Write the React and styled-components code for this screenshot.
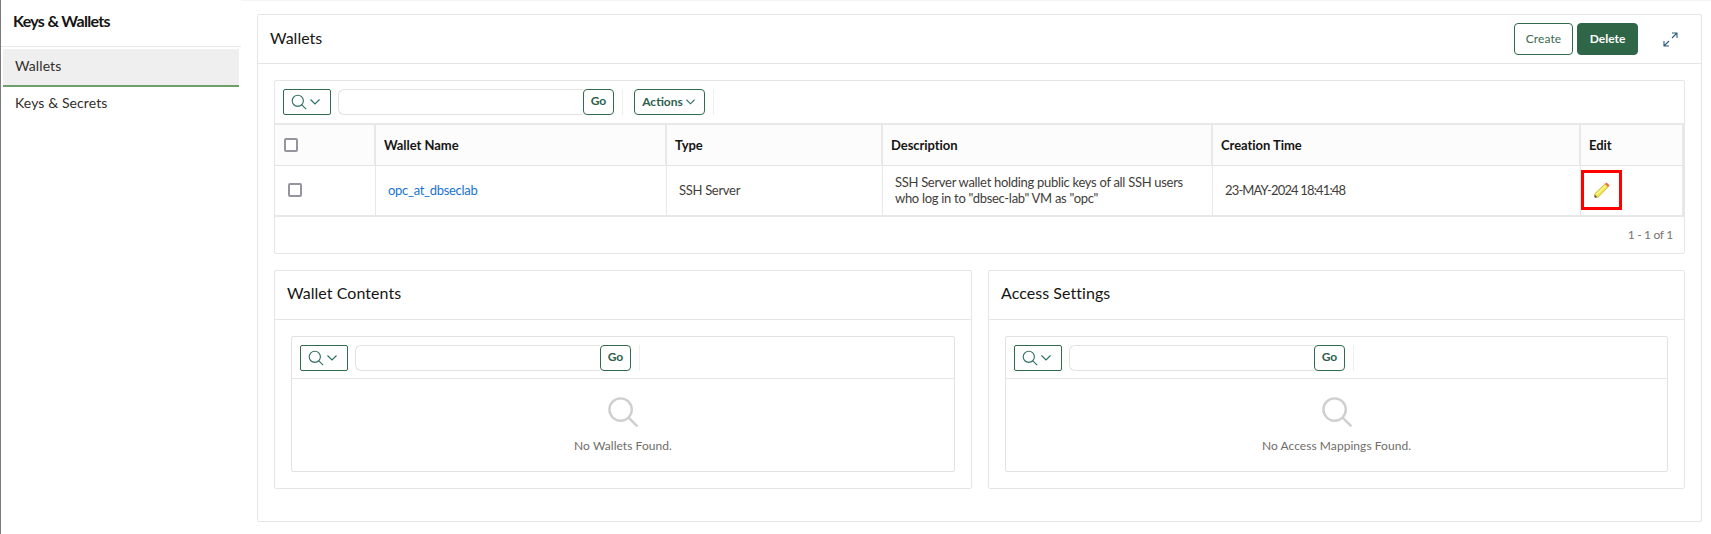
import React from 'react'
import styled, { createGlobalStyle } from 'styled-components'

const GlobalStyle = createGlobalStyle`
  html, body { margin: 0; padding: 0; background: #fff; }
  body { font-family: "Lato", "Noto Sans", sans-serif; color: #161513; }
`

const columns = '101px 291px 216px 330px 368px 1fr'

function SearchIcon({ size = 16, color = '#2f6f63', stroke = 1.4 }) {
  return (
    <svg width={size} height={size} viewBox="0 0 20 20" fill="none" stroke={color} strokeWidth={stroke}>
      <circle cx="8.5" cy="8.5" r="7" />
      <path d="M13.5 13.5 L19 19" />
    </svg>
  )
}

function Chevron({ color = '#2f6f63', width = 10 }) {
  return (
    <svg width={width} height="6" viewBox="0 0 10 6" fill="none" stroke={color} strokeWidth="1.2">
      <path d="M0.5 0.5 L5 5 L9.5 0.5" />
    </svg>
  )
}

function ExpandIcon() {
  return (
    <svg width="15" height="15" viewBox="0 0 15 15" fill="none" stroke="#2b5c7d" strokeWidth="1.1">
      <path d="M9 1 H14 V6 M14 1 L9 6" />
      <path d="M1 9 V14 H6 M1 14 L6 9" />
    </svg>
  )
}

function PencilIcon() {
  return (
    <svg width="16" height="16" viewBox="0 0 16 16">
      <path d="M0.8 11.8 L11 1.8 L14.2 5 L4 15.2 L0.8 15.2 Z" fill="#f4e64e" stroke="#b9a62a" strokeWidth="0.7" />
      <path d="M2.6 12.4 L12 3.4" stroke="#fff8a8" strokeWidth="1.1" />
      <path d="M11 1.8 L12.6 0.4 L15.6 3.4 L14.2 5 Z" fill="#ef6a45" />
      <path d="M0.8 12.8 L3.2 15.2 L0.6 15.6 Z" fill="#4a4a42" />
    </svg>
  )
}

function Toolbar({ actions, height = 42 }) {
  return (
    <ToolbarRow $height={height}>
      <SearchButton>
        <SearchIcon />
        <Chevron />
      </SearchButton>
      <SearchField>
        <SearchInput />
        <GoButton>Go</GoButton>
      </SearchField>
      <ToolDivider />
      {actions && (
        <>
          <ActionsButton>
            Actions <Chevron width={9} />
          </ActionsButton>
          <ToolDivider />
        </>
      )}
    </ToolbarRow>
  )
}

function SubPanel({ title, message }) {
  return (
    <Panel>
      <SubHeader>{title}</SubHeader>
      <SubBody>
        <EmptyCard>
          <Toolbar height={41} />
          <EmptyState>
            <SearchIcon size={32} color="#d0cfce" stroke={1.5} />
            <EmptyText>{message}</EmptyText>
          </EmptyState>
        </EmptyCard>
      </SubBody>
    </Panel>
  )
}

export default function App() {
  return (
    <Page>
      <GlobalStyle />
      <Sidebar>
        <SideTitle>Keys &amp; Wallets</SideTitle>
        <SideNav>
          <SideItem $active>Wallets</SideItem>
          <SideItem>Keys &amp; Secrets</SideItem>
        </SideNav>
      </Sidebar>
      <Main>
        <MainPanel>
          <MainHeader>
            <MainTitle>Wallets</MainTitle>
            <HeaderActions>
              <CreateButton>Create</CreateButton>
              <DeleteButton>Delete</DeleteButton>
              <ExpandSlot><ExpandIcon /></ExpandSlot>
            </HeaderActions>
          </MainHeader>
          <MainBody>
            <ReportCard>
              <Toolbar actions />
              <HeadRow>
                <HeadCheckCell><Checkbox /></HeadCheckCell>
                <HeadCell>Wallet Name</HeadCell>
                <HeadCell>Type</HeadCell>
                <HeadCell>Description</HeadCell>
                <HeadCell>Creation Time</HeadCell>
                <HeadCell>Edit</HeadCell>
              </HeadRow>
              <DataRow>
                <CheckCell><Checkbox /></CheckCell>
                <DataCell><WalletLink>opc_at_dbseclab</WalletLink></DataCell>
                <DataCell>SSH Server</DataCell>
                <DataCell>SSH Server wallet holding public keys of all SSH users<br />who log in to "dbsec-lab" VM as "opc"</DataCell>
                <TimeCell>23-MAY-2024 18:41:48</TimeCell>
                <EditCell><Highlight><PencilIcon /></Highlight></EditCell>
              </DataRow>
              <Pagination>1 - 1 of 1</Pagination>
            </ReportCard>
            <SubGrid>
              <SubPanel title="Wallet Contents" message="No Wallets Found." />
              <SubPanel title="Access Settings" message="No Access Mappings Found." />
            </SubGrid>
          </MainBody>
        </MainPanel>
      </Main>
    </Page>
  )
}

const Page = styled.div`
  display: flex;
  width: 1711px;
  height: 534px;
  overflow: hidden;
  border-left: 1px solid #7a7a7a;
  box-sizing: border-box;
`

const Sidebar = styled.aside`
  width: 240px;
  flex: none;
`

const SideTitle = styled.div`
  height: 46px;
  padding-left: 12px;
  font-size: 16px;
  font-weight: 700;
  line-height: 41px;
  letter-spacing: -0.7px;
  border-bottom: 1px solid #e9e9e9;
`

const SideNav = styled.nav`
  display: flex;
  flex-direction: column;
  padding: 2px 2px 0;
`

const SideItem = styled.div`
  height: 36px;
  padding-left: 12px;
  font-size: 14px;
  line-height: ${props => (props.$active ? '33px' : '31px')};
  letter-spacing: 0.1px;
  color: #312d2a;
  background: ${props => (props.$active ? '#efefef' : 'transparent')};
  border-bottom: 2px solid ${props => (props.$active ? '#6f9f6b' : 'transparent')};
`

const Main = styled.main`
  flex: 1;
  padding: 14px 9px 0 16px;
  border-top: 1px solid #f4f4f4;
`

const MainPanel = styled.section`
  height: 508px;
  box-sizing: border-box;
  margin-top: -1px;
  border: 1px solid #e6e6e6;
  border-radius: 2px;
`

const MainHeader = styled.header`
  display: flex;
  align-items: center;
  justify-content: space-between;
  height: 48px;
  padding: 0 23px 0 12px;
  border-bottom: 1px solid #e6e6e6;
`

const MainTitle = styled.h2`
  margin: 0 0 4px;
  font-size: 16px;
  font-weight: 400;
`

const HeaderActions = styled.div`
  display: flex;
  align-items: center;
  gap: 4px;
`

const BaseButton = styled.button`
  height: 32px;
  box-sizing: border-box;
  border-radius: 4px;
  font-family: inherit;
  font-size: 12px;
  padding: 0 0 2px;
`

const CreateButton = styled(BaseButton)`
  width: 59px;
  background: #fff;
  color: #3a6b50;
  border: 1px solid #316a4c;
  letter-spacing: 0.1px;
`

const DeleteButton = styled(BaseButton)`
  width: 61px;
  background: #2f6647;
  color: #fff;
  font-weight: 700;
  border: 1px solid #2f6647;
`

const ExpandSlot = styled.div`
  display: flex;
  margin-left: 21px;
`

const MainBody = styled.div`
  padding: 16px 16px 0;
`

const ReportCard = styled.div`
  border: 1px solid #e6e6e6;
  border-radius: 2px;
`

const ToolbarRow = styled.div`
  display: flex;
  align-items: center;
  height: ${props => props.$height}px;
  box-sizing: border-box;
  padding-left: 8px;
`

const SearchButton = styled.div`
  display: flex;
  align-items: center;
  gap: 3px;
  width: 48px;
  height: 26px;
  box-sizing: border-box;
  padding-left: 7px;
  border: 1px solid #316a4c;
  border-radius: 2px;
`

const SearchField = styled.div`
  display: flex;
  margin-left: 7px;
  height: 26px;
`

const SearchInput = styled.div`
  width: 245px;
  box-sizing: border-box;
  border: 1px solid #e2e2e2;
  border-right: none;
  border-radius: 6px 0 0 6px;
`

const GoButton = styled.div`
  width: 31px;
  box-sizing: border-box;
  border: 1px solid #316a4c;
  border-radius: 4px;
  text-align: center;
  font-size: 12px;
  font-weight: 700;
  line-height: 21px;
  color: #2c5f4e;
`

const ToolDivider = styled.div`
  width: 1px;
  height: 26px;
  margin-left: 8px;
  background: #efefef;
`

const ActionsButton = styled.div`
  display: flex;
  align-items: center;
  gap: 3px;
  justify-content: center;
  width: 71px;
  height: 26px;
  box-sizing: border-box;
  margin-left: 11px;
  padding: 0 2px 2px 0;
  border: 1px solid #316a4c;
  border-radius: 4px;
  font-size: 12px;
  font-weight: 700;
  color: #2c5f4e;

  svg {
    margin-top: 2px;
  }
`

const HeadRow = styled.div`
  display: grid;
  grid-template-columns: ${columns};
  height: 43px;
  box-sizing: border-box;
  border-top: 2px solid #e8e8e8;
  border-bottom: 1px solid #e4e4e4;
  background: #fcfcfc;
`

const HeadCell = styled.div`
  display: flex;
  align-items: center;
  padding: 0 0 1px 8px;
  font-size: 13px;
  font-weight: 700;
  letter-spacing: -0.05px;
  color: #161513;
  border-right: 2px solid #e8e8e8;
`

const HeadCheckCell = styled(HeadCell)`
  padding-left: 9px;
`

const DataRow = styled.div`
  display: grid;
  grid-template-columns: ${columns};
  height: 51px;
  box-sizing: border-box;
  border-bottom: 2px solid #e8e8e8;
`

const DataCell = styled.div`
  display: flex;
  align-items: center;
  padding: 0 0 1px 12px;
  font-size: 13px;
  line-height: 16px;
  letter-spacing: -0.3px;
  color: #3f3d3a;
  border-right: 1px solid #e8e8e8;
`

const CheckCell = styled(DataCell)`
  padding-left: 13px;
`

const TimeCell = styled(DataCell)`
  letter-spacing: -0.85px;
`

const EditCell = styled(DataCell)`
  padding-left: 0;
  border-right: 2px solid #e8e8e8;
`

const Highlight = styled.div`
  display: flex;
  align-items: center;
  justify-content: center;
  width: 41px;
  height: 40px;
  box-sizing: border-box;
  border: 3px solid #ff0000;
`

const Checkbox = styled.span`
  display: block;
  width: 14px;
  height: 14px;
  box-sizing: border-box;
  border: 2px solid #97949f;
  border-radius: 2px;
  background: #fff;
`

const WalletLink = styled.a`
  color: #1a73d0;
  font-size: 13px;
`

const Pagination = styled.div`
  height: 36px;
  padding-right: 11px;
  text-align: right;
  font-size: 12px;
  line-height: 36px;
  letter-spacing: -0.3px;
  color: #77736f;
`

const SubGrid = styled.div`
  display: grid;
  grid-template-columns: 698px 1fr;
  gap: 16px;
  margin-top: 16px;
`

const Panel = styled.section`
  border: 1px solid #e6e6e6;
  border-radius: 2px;
`

const SubHeader = styled.h3`
  margin: 0;
  height: 48px;
  padding-left: 12px;
  font-size: 16px;
  font-weight: 400;
  line-height: 43px;
  letter-spacing: 0.05px;
  border-bottom: 1px solid #e6e6e6;
`

const SubBody = styled.div`
  padding: 16px;
`

const EmptyCard = styled.div`
  border: 1px solid #e2e2e2;
  border-radius: 2px;
`

const EmptyState = styled.div`
  display: flex;
  flex-direction: column;
  align-items: center;
  height: 93px;
  box-sizing: border-box;
  padding-top: 17px;
  border-top: 1px solid #e6e6e6;
`

const EmptyText = styled.div`
  margin-top: 10px;
  font-size: 12px;
  letter-spacing: 0.05px;
  color: #6f6c69;
`
